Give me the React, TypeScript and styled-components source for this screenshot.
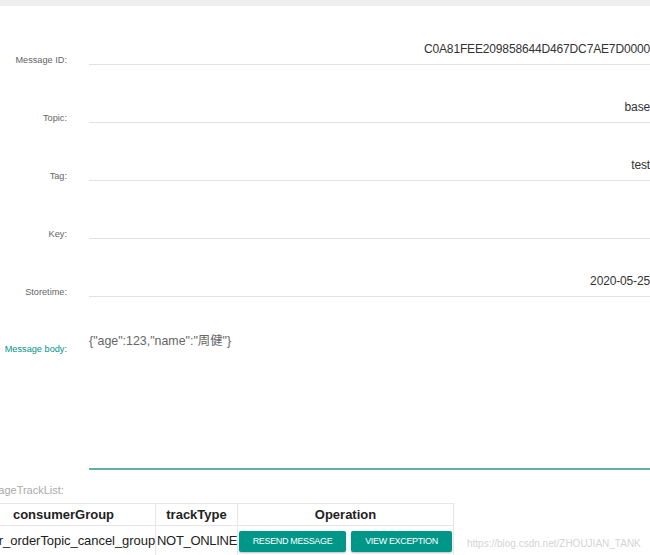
import React from "react";
import styled, { createGlobalStyle } from "styled-components";

const GlobalStyle = createGlobalStyle`
  html, body {
    margin: 0;
    padding: 0;
    background: #fff;
    overflow: hidden;
  }
  body {
    font-family: "Liberation Sans", Arial, "Noto Sans CJK SC", sans-serif;
  }
`;

const colors = {
  teal: "#009688",
  tealLine: "#5fb0aa",
  label: "#666",
  value: "#333",
  line: "#e2e2e2",
  border: "#e6e6e6",
};

const Page = styled.div`
  width: 650px;
  height: 555px;
  overflow: hidden;
`;

const TopBar = styled.div`
  height: 6px;
  background: #eeeeee;
`;

const Form = styled.div`
  padding-top: 1px;
`;

const Row = styled.div`
  display: flex;
  align-items: flex-end;
  height: 58px;
`;

const Label = styled.div<{ $active?: boolean }>`
  width: 67px;
  flex-shrink: 0;
  display: flex;
  justify-content: flex-end;
  white-space: nowrap;
  font-size: 9.2px;
  line-height: 12px;
  color: ${(p) => (p.$active ? colors.teal : colors.label)};
  margin-bottom: -1px;
`;

const Field = styled.div`
  flex: 1;
  margin-left: 22px;
  height: 48px;
  box-sizing: border-box;
  border-bottom: 1px solid ${colors.line};
  display: flex;
  align-items: flex-end;
  justify-content: flex-end;
  padding-bottom: 8px;
  font-size: 12px;
  letter-spacing: -0.15px;
  line-height: 14px;
  color: ${colors.value};
  white-space: nowrap;
`;

const BodyRow = styled.div`
  display: flex;
  align-items: flex-start;
`;

const BodyLabel = styled(Label)`
  margin-top: 46px;
  margin-bottom: 0;
`;

const BodyField = styled.div`
  flex: 1;
  margin-left: 22px;
  height: 173px;
  box-sizing: border-box;
  padding-top: 35px;
  border-bottom: 2px solid ${colors.tealLine};
  font-size: 12.4px;
  line-height: 18px;
  color: #666;
`;

const TrackSection = styled.div`
  margin-left: -28px;
`;

const TrackTitle = styled.div`
  margin-top: 13px;
  margin-bottom: 6px;
  font-size: 11px;
  line-height: 14px;
  color: #aaa;
`;

const TableRow = styled.div`
  display: flex;
  align-items: flex-end;
`;

const Table = styled.table`
  margin-left: -1px;
  border-collapse: collapse;
  table-layout: fixed;
  width: 482px;
  font-size: 13px;
  color: #222;

  th,
  td {
    border: 1px solid ${colors.border};
    padding: 0 1px;
    white-space: nowrap;
    overflow: hidden;
  }

  th {
    height: 21px;
    font-weight: bold;
    text-align: center;
  }

  td {
    height: 29px;
    letter-spacing: -0.3px;
  }
`;

const GroupCell = styled.td`
  && {
    text-align: right;
    letter-spacing: -0.05px;
  }
`;

const Ops = styled.div`
  display: flex;
  gap: 5px;
  padding-top: 1px;
`;

const Button = styled.button<{ $w: number }>`
  width: ${(p) => p.$w}px;
  height: 21px;
  border: none;
  border-radius: 2px;
  background: ${colors.teal};
  color: #fff;
  font-family: "Liberation Sans", Arial, sans-serif;
  font-size: 9px;
  letter-spacing: -0.35px;
  text-transform: uppercase;
  box-shadow: 0 1px 2px rgba(0, 0, 0, 0.25);
  padding: 0;
  cursor: pointer;
`;

const Watermark = styled.div`
  margin-left: 13px;
  margin-bottom: 7px;
  font-size: 10px;
  color: #d4d4d4;
  white-space: nowrap;
`;

const fields = [
  { label: "Message ID:", value: "C0A81FEE209858644D467DC7AE7D0000" },
  { label: "Topic:", value: "base" },
  { label: "Tag:", value: "test" },
  { label: "Key:", value: "" },
  { label: "Storetime:", value: "2020-05-25" },
];

const App = () => (
  <Page>
    <GlobalStyle />
    <TopBar />
    <Form>
      {fields.map((f) => (
        <Row key={f.label}>
          <Label>{f.label}</Label>
          <Field>{f.value}</Field>
        </Row>
      ))}
      <BodyRow>
        <BodyLabel $active>Message body:</BodyLabel>
        <BodyField>{'{"age":123,"name":"周健"}'}</BodyField>
      </BodyRow>
    </Form>
    <TrackSection>
      <TrackTitle>messageTrackList:</TrackTitle>
      <TableRow>
        <Table>
          <colgroup>
            <col style={{ width: 184 }} />
            <col style={{ width: 82 }} />
            <col style={{ width: 216 }} />
          </colgroup>
          <thead>
            <tr>
              <th>consumerGroup</th>
              <th>trackType</th>
              <th>Operation</th>
            </tr>
          </thead>
          <tbody>
            <tr>
              <GroupCell>order_orderTopic_cancel_group</GroupCell>
              <td>NOT_ONLINE</td>
              <td>
                <Ops>
                  <Button $w={107}>Resend Message</Button>
                  <Button $w={101}>View Exception</Button>
                </Ops>
              </td>
            </tr>
          </tbody>
        </Table>
        <Watermark>https://blog.csdn.net/ZHOUJIAN_TANK</Watermark>
      </TableRow>
    </TrackSection>
  </Page>
);

export default App;
